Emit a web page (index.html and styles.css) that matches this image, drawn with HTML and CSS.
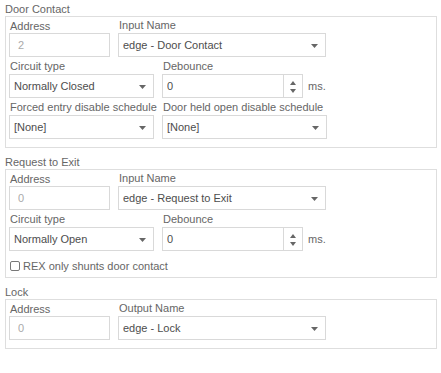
FILE: index.html
```html
<!DOCTYPE html>
<html lang="en">
<head>
   <meta charset="UTF-8">
   <meta name="viewport" content="width=device-width, initial-scale=1.0">
   <title>Door Settings</title>
   <link rel="stylesheet" href="styles.css">
</head>
<body>
   <div class="page">
       <!-- Door contact -->
       <section class="section">
           <h2 class="section-title">Door Contact</h2>
           <div class="group">
               <div class="row">
                   <div class="field w-addr">
                       <label class="field-label label-low">Address</label>
                       <input class="text-input addr-input" value="2" disabled>
                   </div>
                   <div class="field w-name">
                       <label class="field-label">Input Name</label>
                       <div class="select">
                           <select><option>edge - Door Contact</option></select>
                           <svg class="caret" width="7" height="4" viewBox="0 0 7 4"><path d="M0 0h7L3.5 4z"/></svg>
                       </div>
                   </div>
               </div>
               <div class="row">
                   <div class="field w-circuit">
                       <label class="field-label">Circuit type</label>
                       <div class="select">
                           <select><option>Normally Closed</option></select>
                           <svg class="caret" width="7" height="4" viewBox="0 0 7 4"><path d="M0 0h7L3.5 4z"/></svg>
                       </div>
                   </div>
                   <div class="field">
                       <label class="field-label">Debounce</label>
                       <div class="spin-row">
                           <div class="spin">
                               <input class="spin-input" value="0">
                               <div class="spin-buttons">
                                   <svg width="6" height="4" viewBox="0 0 6 4"><path d="M0 4h6L3 0z"/></svg>
                                   <svg width="6" height="4" viewBox="0 0 6 4"><path d="M0 0h6L3 4z"/></svg>
                               </div>
                           </div>
                           <span class="unit">ms.</span>
                       </div>
                   </div>
               </div>
               <div class="row">
                   <div class="field w-circuit">
                       <label class="field-label">Forced entry disable schedule</label>
                       <div class="select">
                           <select><option>[None]</option></select>
                           <svg class="caret" width="7" height="4" viewBox="0 0 7 4"><path d="M0 0h7L3.5 4z"/></svg>
                       </div>
                   </div>
                   <div class="field w-held">
                       <label class="field-label">Door held open disable schedule</label>
                       <div class="select">
                           <select><option>[None]</option></select>
                           <svg class="caret" width="7" height="4" viewBox="0 0 7 4"><path d="M0 0h7L3.5 4z"/></svg>
                       </div>
                   </div>
               </div>
           </div>
       </section>

       <!-- Request to exit -->
       <section class="section">
           <h2 class="section-title">Request to Exit</h2>
           <div class="group group-check">
               <div class="row">
                   <div class="field w-addr">
                       <label class="field-label label-low">Address</label>
                       <input class="text-input addr-input" value="0" disabled>
                   </div>
                   <div class="field w-name">
                       <label class="field-label">Input Name</label>
                       <div class="select">
                           <select><option>edge - Request to Exit</option></select>
                           <svg class="caret" width="7" height="4" viewBox="0 0 7 4"><path d="M0 0h7L3.5 4z"/></svg>
                       </div>
                   </div>
               </div>
               <div class="row">
                   <div class="field w-circuit">
                       <label class="field-label">Circuit type</label>
                       <div class="select">
                           <select><option>Normally Open</option></select>
                           <svg class="caret" width="7" height="4" viewBox="0 0 7 4"><path d="M0 0h7L3.5 4z"/></svg>
                       </div>
                   </div>
                   <div class="field">
                       <label class="field-label">Debounce</label>
                       <div class="spin-row">
                           <div class="spin">
                               <input class="spin-input" value="0">
                               <div class="spin-buttons">
                                   <svg width="6" height="4" viewBox="0 0 6 4"><path d="M0 4h6L3 0z"/></svg>
                                   <svg width="6" height="4" viewBox="0 0 6 4"><path d="M0 0h6L3 4z"/></svg>
                               </div>
                           </div>
                           <span class="unit">ms.</span>
                       </div>
                   </div>
               </div>
               <label class="check-row">
                   <input type="checkbox" class="checkbox">
                   REX only shunts door contact
               </label>
           </div>
       </section>

       <!-- Lock -->
       <section class="section">
           <h2 class="section-title">Lock</h2>
           <div class="group">
               <div class="row">
                   <div class="field w-addr">
                       <label class="field-label label-low">Address</label>
                       <input class="text-input addr-input" value="0" disabled>
                   </div>
                   <div class="field w-name">
                       <label class="field-label">Output Name</label>
                       <div class="select">
                           <select><option>edge - Lock</option></select>
                           <svg class="caret" width="7" height="4" viewBox="0 0 7 4"><path d="M0 0h7L3.5 4z"/></svg>
                       </div>
                   </div>
               </div>
           </div>
       </section>
   </div>
</body>
</html>
```

FILE: styles.css
```css
:root {
    --label: #666666;
    --text: #4d4d4d;
    --muted: #aaaaaa;
    --border: #d9d9d9;
    --group-border: #dedede;
    --caret: #666666;
}

* {
    margin: 0;
    padding: 0;
    box-sizing: border-box;
}

body {
    background: #ffffff;
    font-family: 'Liberation Sans', Arial, sans-serif;
    font-size: 11px;
    color: var(--text);
}

.page {
    padding: 2px 4px 0 5px;
}

.section {
    margin-bottom: 7px;
}

.section-title {
    font-size: 11px;
    font-weight: normal;
    line-height: 14px;
    color: var(--label);
}

.group {
    border: 1px solid var(--group-border);
    padding: 0 3px 8px;
}

.group-check {
    padding-bottom: 2px;
}

.row {
    display: flex;
    gap: 8px;
    margin-bottom: 1px;
}

.row:last-child {
    margin-bottom: 0;
}

.field {
    display: flex;
    flex-direction: column;
}

.w-addr { width: 101px; }
.w-name { width: 208px; }
.w-circuit { width: 145px; }
.w-held { width: 165px; }

.field-label {
    display: block;
    line-height: 16px;
    padding-left: 1px;
    color: var(--label);
    white-space: nowrap;
}

.label-low {
    padding-top: 2px;
    line-height: 14px;
}

.text-input {
    width: 100%;
    height: 24px;
    border: 1px solid var(--border);
    background: #ffffff;
    font-family: inherit;
    font-size: 11px;
    color: var(--text);
    padding: 0 4px;
}

.addr-input {
    padding-left: 8px;
    color: var(--muted);
}

.select {
    position: relative;
    height: 24px;
}

.select select {
    appearance: none;
    -webkit-appearance: none;
    width: 100%;
    height: 100%;
    border: 1px solid var(--border);
    border-radius: 0;
    background: #ffffff;
    font-family: inherit;
    font-size: 11px;
    color: var(--text);
    padding: 0 20px 0 4px;
}

.caret {
    position: absolute;
    right: 8px;
    top: 11px;
    fill: var(--caret);
    pointer-events: none;
}

.spin-row {
    display: flex;
    align-items: center;
}

.spin {
    display: flex;
    width: 141px;
    height: 24px;
    border: 1px solid var(--border);
}

.spin-input {
    flex: 1;
    min-width: 0;
    border: none;
    outline: none;
    font-family: inherit;
    font-size: 11px;
    color: var(--text);
    padding: 0 4px;
}

.spin-buttons {
    width: 19px;
    border-left: 1px solid var(--border);
    display: flex;
    flex-direction: column;
    align-items: center;
    justify-content: center;
    gap: 4px;
    padding-top: 1px;
}

.spin-buttons svg {
    fill: var(--caret);
}

.unit {
    margin-left: 5px;
    color: var(--label);
}

.check-row {
    display: flex;
    align-items: center;
    height: 18px;
    margin-top: 6px;
    padding-left: 1px;
    color: var(--label);
}

.checkbox {
    appearance: none;
    -webkit-appearance: none;
    width: 10px;
    height: 10px;
    border: 1px solid #777777;
    border-radius: 2px;
    background: #ffffff;
    margin-right: 3px;
}
```
